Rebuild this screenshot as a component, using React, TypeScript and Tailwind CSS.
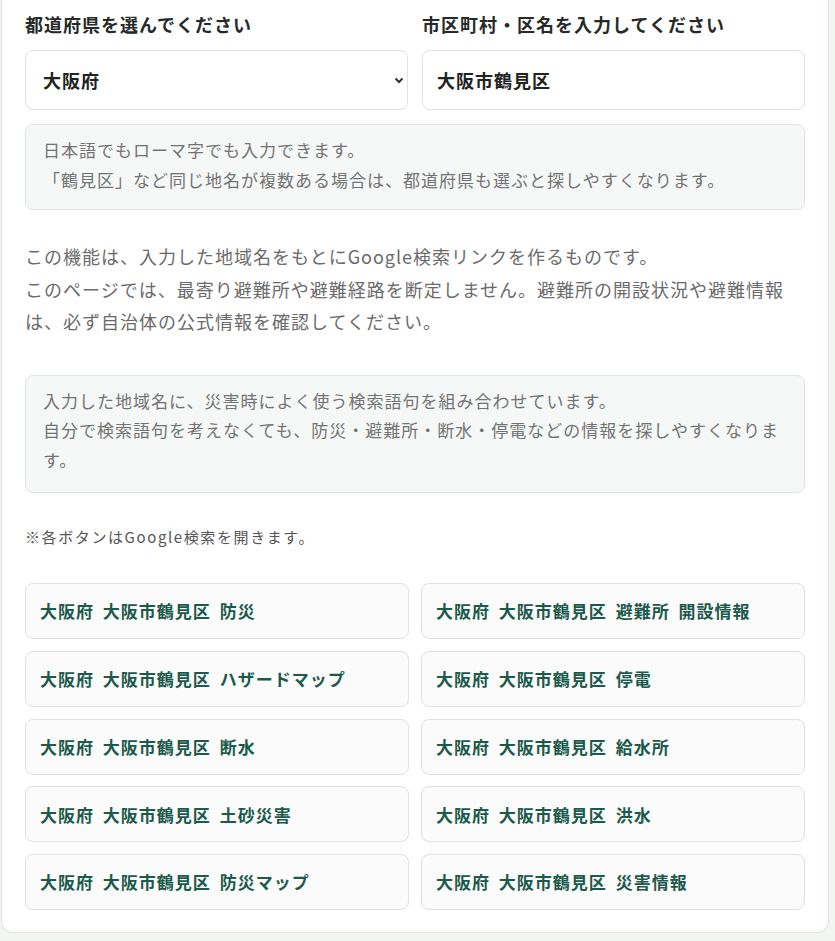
import React from 'react';

const prefecture = '大阪府';
const city = '大阪市鶴見区';

const keywords = [
  '防災',
  '避難所 開設情報',
  'ハザードマップ',
  '停電',
  '断水',
  '給水所',
  '土砂災害',
  '洪水',
  '防災マップ',
  '災害情報',
];

export default function App() {
  return (
    <div
      className="min-h-screen bg-[#f3f5f3] pb-[8px]"
      style={{ fontFamily: '"Noto Sans CJK JP", "Noto Sans", sans-serif' }}
    >
      <div className="ml-[1px] w-[828px] bg-white border border-t-0 border-[#dde3e0] rounded-b-xl px-[23px] pt-[11px] pb-[22px]">
        {/* Inputs */}
        <div className="grid grid-cols-2 gap-[14px]">
          <div>
            <label className="block text-[18px] leading-[26px] font-bold tracking-[1px] text-[#262b29]">
              都道府県を選んでください
            </label>
            <div className="relative mt-[13px]">
              <select
                defaultValue={prefecture}
                className="w-full h-[60px] appearance-none rounded-lg border border-[#dde3e0] bg-white pl-[17px] pr-10 text-[18px] font-bold tracking-[1px] text-[#1f2422] outline-none"
              >
                <option>北海道</option>
                <option>東京都</option>
                <option>大阪府</option>
              </select>
              <svg
                className="pointer-events-none absolute right-[3px] top-[25px]"
                width="12"
                height="10"
                viewBox="0 0 12 10"
                fill="none"
              >
                <path d="M2.5 3.5 L6 7 L9.5 3.5" stroke="#333" strokeWidth="2" />
              </svg>
            </div>
          </div>
          <div>
            <label className="block text-[18px] leading-[26px] font-bold tracking-[1px] text-[#262b29]">
              市区町村・区名を入力してください
            </label>
            <input
              defaultValue={city}
              className="mt-[13px] w-full h-[60px] rounded-lg border border-[#dde3e0] bg-white px-[14px] text-[18px] font-bold tracking-[1px] text-[#1f2422] outline-none"
            />
          </div>
        </div>

        {/* Hint box */}
        <div className="mt-[14px] rounded-lg border border-[#dfe4e2] bg-[#f6f8f7] px-[17px] pt-[10px] pb-[14px] text-[17px] leading-[30px] tracking-[1px] text-[#737373]">
          <p>日本語でもローマ字でも入力できます。</p>
          <p>「鶴見区」など同じ地名が複数ある場合は、都道府県も選ぶと探しやすくなります。</p>
        </div>

        {/* Description */}
        <div className="mt-[30px] text-[18px] leading-[32.5px] tracking-[1px] text-[#6b6b6b]">
          <p>この機能は、入力した地域名をもとにGoogle検索リンクを作るものです。</p>
          <p>
            このページでは、最寄り避難所や避難経路を断定しません。避難所の開設状況や避難情報は、必ず自治体の公式情報を確認してください。
          </p>
        </div>

        <div className="mt-[37px] rounded-lg border border-[#dfe4e2] bg-[#f6f8f7] px-[17px] pt-[10px] pb-[18px] text-[17px] leading-[29.5px] tracking-[1px] text-[#737373]">
          <p>入力した地域名に、災害時によく使う検索語句を組み合わせています。</p>
          <p>
            自分で検索語句を考えなくても、防災・避難所・断水・停電などの情報を探しやすくなります。
          </p>
        </div>

        <p className="mt-[32px] text-[15px] leading-[24px] tracking-[1.6px] text-[#555]">
          ※各ボタンはGoogle検索を開きます。
        </p>

        {/* Search buttons */}
        <div className="mt-[34px] grid grid-cols-2 gap-x-[12px] gap-y-[11.75px]">
          {keywords.map((k) => (
            <a
              key={k}
              href="#"
              className="flex h-[56px] items-center rounded-lg border border-[#dde3e0] bg-[#fafbfa] px-[14px] text-[17px] font-bold tracking-[1px] [word-spacing:4px] text-[#1c5a4c]"
            >
              {prefecture} {city} {k}
            </a>
          ))}
        </div>
      </div>
    </div>
  );
}
